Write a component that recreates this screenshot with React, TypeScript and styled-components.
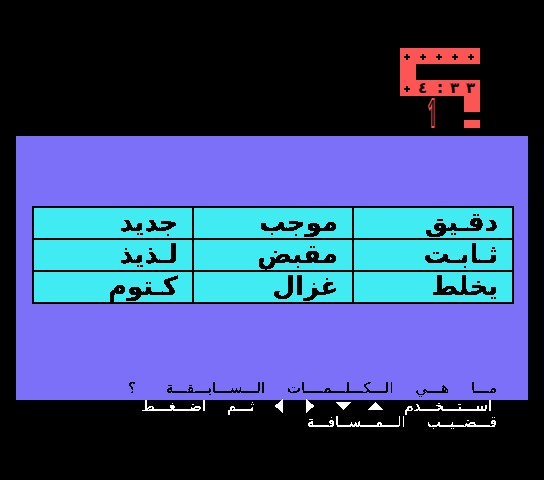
import styled, { createGlobalStyle } from "styled-components";

const RED = "#fc5554";
const PANEL = "#7d70f8";
const CYAN = "#40ebf2";

const GlobalStyle = createGlobalStyle`
  html, body {
    margin: 0;
    padding: 0;
    background: #000;
  }
`;

const Screen = styled.div`
  width: 544px;
  height: 480px;
  background: #000;
  overflow: hidden;
  font-family: "DejaVu Sans", sans-serif;
`;

const Header = styled.header`
  height: 136px;
  display: flex;
  justify-content: flex-end;
  align-items: flex-start;
  padding: 48px 64px 0 0;
  box-sizing: border-box;
`;

const LogoSvg = styled.svg`
  display: block;
  overflow: visible;
`;

const Panel = styled.main`
  height: 264px;
  margin: 0 16px;
  padding: 70px 14px 0 16px;
  box-sizing: border-box;
  background: ${PANEL};
  display: flex;
  flex-direction: column;
`;

const WordTable = styled.div`
  direction: rtl;
  display: grid;
  grid-template-columns: 160px 160px 158px;
  grid-template-rows: 32px 32px 30px;
  height: 98px;
  box-sizing: border-box;
  background: ${CYAN};
  border: 2px solid #000;
`;

const WordCell = styled.div<{ $last?: boolean; $lastRow?: boolean }>`
  box-sizing: border-box;
  border-left: ${(p) => (p.$last ? "0" : "2px solid #000")};
  border-bottom: ${(p) => (p.$lastRow ? "0" : "2px solid #000")};
  padding-right: 14px;
  color: #000;
  font-size: 26px;
  font-weight: 700;
  line-height: 28px;
  text-align: right;
  white-space: nowrap;
  filter: url(#crisp);
`;

const Prompt = styled.p`
  direction: rtl;
  display: flex;
  gap: 22px;
  margin: 0;
  height: 0;
  padding-right: 17px;
  position: relative;
  top: 74px;
  color: #000;
  font-size: 15px;
  line-height: 20px;
  white-space: nowrap;
  filter: url(#crisp);
`;

const QuestionMark = styled.span`
  margin-right: 8px;
`;

const Footer = styled.footer`
  direction: rtl;
  padding: 0 47px 0 0;
  margin-top: -2px;
  color: #fff;
  font-size: 15px;
  white-space: nowrap;
  filter: url(#crisp);
`;

const FooterLine = styled.div<{ $inset?: number }>`
  display: flex;
  align-items: center;
  gap: 21px;
  height: 16px;
  line-height: 16px;
  margin-right: ${(p) => p.$inset ?? 0}px;
`;

const Arrows = styled.span`
  display: inline-flex;
  direction: ltr;
  align-items: center;
  gap: 23px;
`;

const Arrow = styled.svg<{ $pull?: number }>`
  display: block;
  margin-left: ${(p) => p.$pull ?? 0}px;
`;

const HiddenDefs = styled.svg`
  position: absolute;
  width: 0;
  height: 0;
`;

const Rows = [
  ["دقـيق", "موجب", "جديد"],
  ["ثـابـت", "مقبض", "لـذيذ"],
  ["يخلط", "غزال", "كـتوم"],
];

const PLUS = "h2v2h2v2h-2v2h-2v-2h-2v-2h2z";

function Logo() {
  return (
    <LogoSvg width="80" height="88" viewBox="400 48 80 88">
      <path
        d="M400 48H480V64H416V80H480V112H464V96H400ZM464 120H480V128H464Z"
        fill={RED}
      />
      {[407, 423, 439, 455, 471].map((x) => (
        <path key={x} d={`M${x - 1} 54${PLUS}`} fill="#000" />
      ))}
      <path d={`M406 86${PLUS}`} fill="#000" />
      <text
        x="418 437 450 466"
        y="93"
        fontSize="15"
        fontFamily="DejaVu Sans"
        fontWeight="700"
        direction="ltr"
      >
        ٤:٣٣
      </text>
      <text
        x="432"
        y="127"
        fontSize="40"
        fontFamily="Open Sans"
        fontWeight="700"
        textAnchor="middle"
        textLength="9"
        lengthAdjust="spacingAndGlyphs"
        fill="#000"
        stroke={RED}
        strokeWidth="2"
      >
        1
      </text>
    </LogoSvg>
  );
}

function ArrowIcons() {
  return (
    <Arrows>
      <Arrow width="8" height="14" viewBox="0 0 8 14">
        <path d="M8 0V14L0 7Z" fill="#fff" />
      </Arrow>
      <Arrow width="8" height="14" viewBox="0 0 8 14">
        <path d="M0 0V14L8 7Z" fill="#fff" />
      </Arrow>
      <Arrow $pull={-1} width="15" height="8" viewBox="0 0 15 8">
        <path d="M0 0H15L7.5 8Z" fill="#fff" />
      </Arrow>
      <Arrow $pull={-6} width="15" height="8" viewBox="0 0 15 8">
        <path d="M0 8H15L7.5 0Z" fill="#fff" />
      </Arrow>
    </Arrows>
  );
}

export default function App() {
  return (
    <Screen>
      <GlobalStyle />
      <HiddenDefs aria-hidden="true">
        <filter id="crisp" x="0" y="0" width="100%" height="100%" colorInterpolationFilters="sRGB">
          <feComponentTransfer>
            <feFuncA type="discrete" tableValues="0 1 1" />
          </feComponentTransfer>
        </filter>
      </HiddenDefs>
      <Header>
        <Logo />
      </Header>
      <Panel>
        <WordTable>
          {Rows.map((row, r) =>
            row.map((word, c) => (
              <WordCell key={word} $last={c === 2} $lastRow={r === 2}>
                {word}
              </WordCell>
            )),
          )}
        </WordTable>
        <Prompt>
          <span>مـــا</span>
          <span>هـــي</span>
          <span>الـــكـــلـــمــــات</span>
          <span>الـــســـابـــقـــة</span>
          <QuestionMark>؟</QuestionMark>
        </Prompt>
      </Panel>
      <Footer>
        <FooterLine $inset={5}>
          <span>اســـتـــخـــدم</span>
          <ArrowIcons />
          <span>ثـــم</span>
          <span>اضـــغـــط</span>
        </FooterLine>
        <FooterLine>
          <span>قـــضــيــب</span>
          <span>الـــمـــســافـــة</span>
        </FooterLine>
      </Footer>
    </Screen>
  );
}
